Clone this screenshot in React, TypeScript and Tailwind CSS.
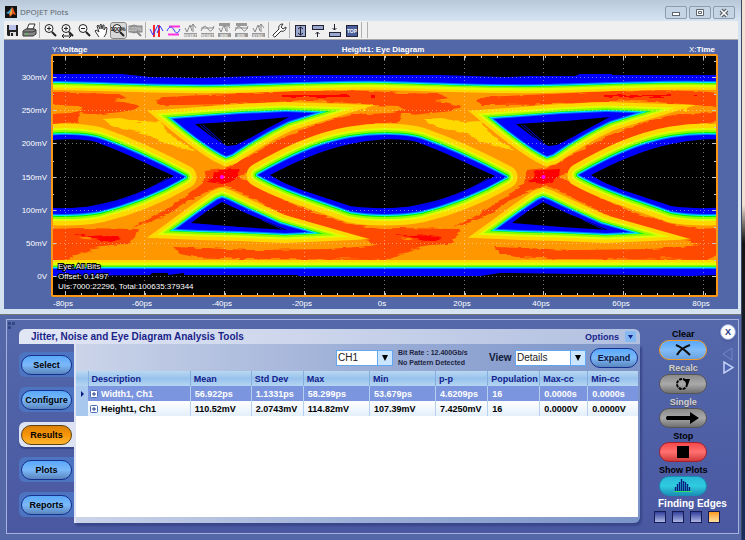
import { useState } from 'react';
import type { ReactNode } from 'react';
import clsx from 'clsx';

const PERIOD = 321;
const SHIFTS = [-PERIOD, 0, PERIOD];

// One unit interval of the eye, centred on the crossing at x = 222.
const EYE = {
  edge: 'M258 175 C285 160 315 144 350 138 C375 134 405 134 421 139 C450 149 480 163 506 177 C480 192 450 204 421 211 C400 215 370 215 350 211 C315 198 285 190 258 175Z',
  core: 'M270 175 C295 162 322 150 350 144 C378 138 402 138 417 142 C445 152 470 165 495 176 C470 189 445 200 417 205 C400 209 370 209 350 206 C315 194 290 188 270 175Z',
};

const WEDGES = [
  {
    edge: 'M173 119 L200 117 L240 114 L285 112 L315 113 L289 121 C265 132 245 145 232 154 L226 156 L220 153 C204 144 190 133 173 119Z',
    core: 'M195 124 L245 121 L289 117 C276 124 262 131 252 137 L236 145 L227 146 L212 137Z',
  },
  {
    edge: 'M176 229 L198 213 L217 200 L222 198 L228 200 C244 208 262 216 280 224 L308 232 L285 233 L240 231 L200 230Z',
    core: 'M191 223 L207 211 L222 202 L248 214 L268 222 L287 230 L240 227Z',
  },
];

const LAYERS = [
  { color: '#ffd800', eye: 23, wedge: 20, rail: 18 },
  { color: '#dfff00', eye: 14, wedge: 13, rail: 13 },
  { color: '#8cff00', eye: 10, wedge: 9, rail: 8 },
  { color: '#00f000', eye: 6, wedge: 5, rail: 5 },
  { color: '#00e8ff', eye: 4, wedge: 4, rail: 4 },
  { color: '#0070ff', eye: 2, wedge: 2, rail: 2 },
];

const TOP_EDGE = 'M-20 0 V81 H60 C110 82 170 85 225 84 S340 80 385 81 S490 85 545 84 S650 80 706 81 H800 V0Z';
const BOTTOM_EDGE = 'M-20 400 V269 H800 V400Z';

const X_TICKS = [
  { x: 65, label: '-80ps' },
  { x: 144, label: '-60ps' },
  { x: 224, label: '-40ps' },
  { x: 304, label: '-20ps' },
  { x: 384, label: '0s' },
  { x: 464, label: '20ps' },
  { x: 543, label: '40ps' },
  { x: 623, label: '60ps' },
  { x: 703, label: '80ps' },
];

const Y_TICKS = [
  { y: 77, label: '300mV' },
  { y: 110, label: '250mV' },
  { y: 143, label: '200mV' },
  { y: 177, label: '150mV' },
  { y: 210, label: '100mV' },
  { y: 243, label: '50mV' },
  { y: 276, label: '0V' },
];

const MINOR_X = Array.from({ length: 41 }, (_, i) => 65 + i * 16);

function Traces() {
  return (
    <g fill="none" stroke="#ff4a00" strokeLinecap="round">
      {/* upper rail */}
      <path fill="#ff4a00" stroke="none" d="M155 101 L165 97 C200 95 240 94 270 92 C320 89 370 90 400 93 L440 94 L448 98 L436 100 L462 106 L451 111 L404 116 L395 108 C370 104 330 101 290 101 C250 104 200 105 160 105Z" />
      {/* lower rail */}
      <path fill="#ff4a00" stroke="none" d="M173 247 L205 248 L250 250 L330 249 L370 246 L400 240 L460 230 L440 244 L415 247 L424 249 L400 254 L385 260 L240 259 L195 257 L180 254Z" />
      <path fill="#ff4a00" stroke="none" d="M370 229 L400 228 L460 229 L455 238 L450 244 L400 246 L370 244Z" />
      {/* edges leaving the crossing */}
      <path strokeWidth="13" d="M222 177 C255 163 280 143 312 133 C340 123 370 117 402 115" />
      <path strokeWidth="13" d="M222 177 C255 190 280 208 312 219 C340 229 370 237 410 239" />
      {/* edges entering the crossing */}
      <path fill="#ff4a00" stroke="none" d="M132 228 L160 213 L185 197 L203 183 L206 170 L222 168 L226 185 L206 192 L190 200 L168 214 L150 222Z" />
      <path fill="#ffd800" stroke="none" d="M103 119 L120 118 L140 122 L160 121 L165 128 L172 136 L196 152 L176 146 L158 141 L149 135 L138 132 L122 129 L108 124Z" />
      <path fill="#ffd800" stroke="none" d="M365 106 L384 107 L392 110 L362 112Z" />
      {/* lighter patches where the settled levels spread */}
      <path fill="#ff9800" stroke="none" d="M401 113 L432 117 L462 113 L500 113 L482 121 L455 123 L424 124 L400 122Z" />
      <path fill="#ff9800" stroke="none" d="M366 105 L398 106 L405 110 L392 113 L366 114Z" />
      <path fill="#ff9800" stroke="none" d="M410 250 L438 245 L458 244 L490 240 L493 245 L496 252 L510 256 L505 260 L412 260 L422 255Z" />
      <path stroke="#ff9800" strokeWidth="1" d="M402 238 L412 239 M410 252 L422 253 M445 96 L462 97 M436 101 L455 102 M455 109 L475 108" />
      <path stroke="#ff9800" strokeWidth="1" d="M255 249 h18 M296 101 h30 M340 258 h10 M178 187 h8" />
      {/* densest hits */}
      <path fill="#ff0000" stroke="none" d="M207 182 L213 178 L214 172 L220 170 L239 169 L238 176 L231 182 L222 184Z" />
      <path fill="#ff0000" stroke="none" d="M395 234 L412 236 L430 235 L438 236 L442 239 L432 242 L420 240 L410 237 L397 235Z" />
      <path stroke="#ff0000" strokeWidth="2" strokeLinecap="butt" d="M283 96 H350 M371 96 h4" />
    </g>
  );
}

function EyeDiagram() {
  return (
    <svg viewBox="4 40 734 269" className="block w-full" role="img" aria-label="Height1: Eye Diagram">
      <defs>
        <clipPath id="plot-area">
          <rect x="52" y="56" width="664" height="239" />
        </clipPath>
        <filter id="rough" x="0" y="0" width="100%" height="100%">
          <feTurbulence type="fractalNoise" baseFrequency="0.08 0.4" numOctaves="2" seed="4" />
          <feDisplacementMap in="SourceGraphic" scale="4" xChannelSelector="R" yChannelSelector="G" />
        </filter>
      </defs>
      <rect x="4" y="40" width="734" height="269" fill="#5267a7" />
      <rect x="52" y="55" width="664" height="241" fill="#000" />

      <g clipPath="url(#plot-area)">
        <rect x="40" y="56" width="700" height="239" fill="#ff9800" />
        <g filter="url(#rough)">
          {SHIFTS.map((s) => (
            <g key={s} transform={`translate(${s} 0)`}>
              <Traces />
            </g>
          ))}
        </g>
        {LAYERS.map((layer) => (
          <g key={layer.color} stroke={layer.color} fill={layer.color}>
            {SHIFTS.map((s) => (
              <g key={s} transform={`translate(${s} 0)`}>
                <path d={EYE.edge} strokeWidth={layer.eye} strokeLinejoin="round" />
                {WEDGES.map((w) => (
                  <path key={w.edge} d={w.edge} strokeWidth={layer.wedge} strokeLinejoin="miter" strokeMiterlimit="12" />
                ))}
              </g>
            ))}
            <path d={TOP_EDGE} strokeWidth={layer.rail} />
            <path d={BOTTOM_EDGE} strokeWidth={layer.rail} />
          </g>
        ))}
        <g fill="#0000ff">
          <path d={TOP_EDGE} />
          <path d={BOTTOM_EDGE} />
          {SHIFTS.map((s) => (
            <g key={s} transform={`translate(${s} 0)`}>
              {[EYE, ...WEDGES].map((h) => (
                <g key={h.edge}>
                  <path d={h.edge} />
                  <path d={h.core} fill="#000" />
                </g>
              ))}
              <path d="M200 125 L224 146 M203 125 L222 142 M316 151 L342 144 M416 207 C441 202 466 192 489 178 M262 220 L284 230" fill="none" stroke="#0000d0" />
            </g>
          ))}
        </g>
        <path fill="#000" d="M40 50 H740 V75 H612 V74 H580 L575 76 H530 L505 77 L440 75 H290 L255 76 L200 78 L150 77 L122 74 H40Z" />
        <path fill="#000" d="M40 300 V276 L150 275 L152 273 H168 V275 L184 273 V275 L298 275 V276 H480 L500 273 H508 L640 275 L690 276 L716 275 V300Z" />

        <g stroke="#fff" strokeOpacity="0.45" strokeDasharray="1 3">
          {X_TICKS.map((t) => (
            <path key={t.x} d={`M${t.x + 0.5} 56 V295`} />
          ))}
          {Y_TICKS.map((t) => (
            <path key={t.y} d={`M52 ${t.y + 0.5} H716`} />
          ))}
        </g>
        <g stroke="#c8c8c8">
          {MINOR_X.map((x) => (
            <path key={x} d={`M${x + 0.5} 56 v2 M${x + 0.5} 293 v2`} />
          ))}
          {X_TICKS.map((t) => (
            <path key={t.x} d={`M${t.x + 0.5} 56 v4 M${t.x + 0.5} 291 v4`} />
          ))}
          {Y_TICKS.map((t) => (
            <path key={t.y} d={`M52 ${t.y + 0.5} h4 M712 ${t.y + 0.5} h4 M52 ${t.y - 15.5} h2 M714 ${t.y - 15.5} h2`} />
          ))}
        </g>
        <circle cx="222" cy="177" r="2" fill="#ff00ff" />
        <circle cx="543.5" cy="177" r="2" fill="#ff00ff" />
      </g>
      <rect x="52" y="55" width="665" height="241" rx="1" fill="none" stroke="#fb9714" strokeWidth="2" />

      <g fontFamily="Liberation Sans, sans-serif" fontSize="8" fill="#fff">
        <text x="52" y="52">
          Y:<tspan fontWeight="bold">Voltage</tspan>
        </text>
        <text x="383" y="52" textAnchor="middle" fontWeight="bold">
          Height1: Eye Diagram
        </text>
        <text x="715" y="52" textAnchor="end">
          X:<tspan fontWeight="bold">Time</tspan>
        </text>
        {Y_TICKS.map((t) => (
          <text key={t.y} x="47" y={t.y + 3} textAnchor="end">
            {t.label}
          </text>
        ))}
        {X_TICKS.map((t) => (
          <text key={t.x} x={t.x - 2} y="306" textAnchor="middle">
            {t.label}
          </text>
        ))}
        <g stroke="#000" strokeWidth="2" paintOrder="stroke">
          <text x="58" y="269">Eye: All Bits</text>
          <text x="58" y="279">Offset: 0.1497</text>
          <text x="58" y="289">UIs:7000:22296, Total:100635:379344</text>
        </g>
      </g>
    </svg>
  );
}

function Magnifier({ children }: { children?: ReactNode }) {
  return (
    <g fill="none" stroke="#222">
      <circle cx="6" cy="5.5" r="4" fill="#f8f8f8" />
      <path d="M9 9 L13 13" strokeWidth="2" />
      {children}
    </g>
  );
}

function CursorReadout({ wave, top, label }: { wave: boolean; top?: boolean; label: string }) {
  return (
    <g stroke="#888" fill="none">
      {wave ? <path d="M1 5 H14 M1 8 C4 1 6 3 8 6 S12 9 14 3" /> : <path d="M2 5 L4 9 L7 2 L9 8 M10 9 V1 M8 4 L10 1 L13 5" />}
      <rect x="1" y="10" width="13" height="4" fill="#999" stroke="none" />
      <text x="7" y="14" textAnchor="middle" fontSize="4" fontWeight="bold" stroke="none" fill="#eee">
        {label}
      </text>
      {top && <rect x="2" y="0" width="11" height="3" fill="#999" stroke="none" />}
    </g>
  );
}

const TOOL_GROUPS: { name: string; icon: ReactNode; pressed?: boolean }[][] = [
  [
    {
      name: 'Save',
      icon: (
        <>
          <path d="M2 2 H13 V13 H3 L2 12Z" fill="#222" />
          <rect x="4" y="2" width="7" height="5" fill="#b8c0e8" />
          <rect x="5" y="9" width="6" height="4" fill="#ddd" />
          <rect x="6" y="10" width="2" height="3" fill="#222" />
        </>
      ),
    },
    {
      name: 'Print',
      icon: (
        <g stroke="#333">
          <path d="M5 6 L7 1 H13 L11 6Z" fill="#fff" />
          <path d="M1 8 L4 6 H13 L14 7 V11 L11 13 H1Z" fill="#888" />
          <path d="M2 9 H11 M11 9 L14 7" />
          <path d="M3 11 H6" stroke="#5c5" />
        </g>
      ),
    },
  ],
  [
    { name: 'Zoom in', icon: <Magnifier><path d="M4 5.5 h4 M6 3.5 v4" /></Magnifier> },
    { name: 'Zoom horizontally', icon: <Magnifier><path d="M4 5.5 h4 M6 3.5 v4 M2 13 h9 M4 11 l-2 2 l2 2 M9 11 l2 2 l-2 2" /></Magnifier> },
    { name: 'Zoom out', icon: <Magnifier><path d="M4 5.5 h4" /></Magnifier> },
    {
      name: 'Pan',
      icon: <path d="M5 14 L1 8 L2 7 L5 9 L3 3 L4 2 L6 6 V2 L7 1 L8 6 L9 2 L10 2 L10 7 L12 4 L13 5 L12 11 L10 14" fill="#fff" stroke="#333" />,
    },
    {
      name: 'Zoom 100%',
      pressed: true,
      icon: (
        <>
          <Magnifier />
          <text x="7" y="8" textAnchor="middle" fontSize="6" fontWeight="bold" fill="#111">100%</text>
        </>
      ),
    },
    {
      name: 'Zoom all',
      icon: (
        <g stroke="#888" fill="#999">
          <rect x="1" y="3" width="13" height="6" />
          <circle cx="6" cy="6" r="4" />
          <path d="M9 9 L13 13" strokeWidth="2" />
          <text x="7" y="8" textAnchor="middle" fontSize="5" fill="#ddd" stroke="none">100%</text>
        </g>
      ),
    },
  ],
  [
    {
      name: 'Vertical cursors',
      icon: (
        <g fill="none">
          <path d="M5 2 V14 M10 2 V14" stroke="#f22" strokeWidth="2" />
          <path d="M1 6 L4 12 L7 6 L9 2 M8 10 L11 3 L14 8" stroke="#33f" />
        </g>
      ),
    },
    {
      name: 'Horizontal cursors',
      icon: (
        <g fill="none">
          <path d="M3 3.5 H14 M2 11.5 H13" stroke="#f3d" strokeWidth="2" />
          <path d="M1 8 C3 3 6 3 8 7 S12 11 14 6" stroke="#33f" />
        </g>
      ),
    },
    { name: 'Reset vertical cursors', icon: <CursorReadout wave={false} label="RESET" /> },
    { name: 'Reset horizontal cursors', icon: <CursorReadout wave label="RESET" /> },
    { name: 'Vertical cursors max min', icon: <CursorReadout wave={false} top label="MIN" /> },
    { name: 'Horizontal cursors max min', icon: <CursorReadout wave top label="MIN" /> },
    { name: 'Sync cursors', icon: <CursorReadout wave={false} label="SYNC" /> },
  ],
  [
    {
      name: 'Settings',
      icon: <path d="M1 12 L7 6 C6 3 8 1 11 1 L9 4 L11 6 L14 4 C14 7 12 9 9 8 L3 14 C2 14 1 13 1 12Z" fill="#fff" stroke="#333" />,
    },
  ],
  [
    {
      name: 'Fit window',
      icon: (
        <g stroke="#223">
          <rect x="2.5" y="2.5" width="10" height="11" fill="#9aa8d0" />
          <path d="M7.5 4 V12 M5 6 L7.5 4 L10 6 M5 10 L7.5 12 L10 10" fill="none" />
        </g>
      ),
    },
    {
      name: 'Dock top',
      icon: (
        <g stroke="#223" fill="none">
          <rect x="2.5" y="2.5" width="11" height="4" fill="#9aa8d0" />
          <path d="M7.5 14 V9 M5.5 11 L7.5 9 L9.5 11" />
        </g>
      ),
    },
    {
      name: 'Dock bottom',
      icon: (
        <g stroke="#223" fill="none">
          <rect x="2.5" y="9.5" width="11" height="4" fill="#9aa8d0" />
          <path d="M7.5 1 V7 M5.5 5 L7.5 7 L9.5 5" />
        </g>
      ),
    },
    {
      name: 'Always on top',
      icon: (
        <>
          <rect x="2.5" y="2.5" width="11" height="11" fill="#4a5f9c" stroke="#223" />
          <text x="8" y="10" textAnchor="middle" fontSize="5" fontWeight="bold" fill="#fff">TOP</text>
        </>
      ),
    },
  ],
];

function Toolbar() {
  return (
    <div className="flex h-[19px] items-center border-b border-[#a8a8a8] bg-[#f0f0f0] pl-px">
      {TOOL_GROUPS.map((group) => (
        <div key={group[0].name} className="flex items-center">
          <div className="flex gap-[2px]">
            {group.map((tool) => (
              <button
                key={tool.name}
                type="button"
                aria-label={tool.name}
                className={clsx('size-[15px]', tool.pressed && 'rounded-xs bg-[#d8d8d8] outline outline-[#888]')}
              >
                <svg viewBox="0 0 15 15" className="block size-[15px]" fontFamily="Liberation Sans, sans-serif">
                  {tool.icon}
                </svg>
              </button>
            ))}
          </div>
          <span className="mr-[3px] ml-[2px] h-4 w-px bg-[#b0b0b0]" />
        </div>
      ))}
      <span className="ml-[2px] h-4 w-px bg-[#b0b0b0]" />
    </div>
  );
}

function PlotWindow() {
  return (
    <section className="border-b border-[#777] bg-[#d5e3f1] pr-[3px] pb-[5px] pl-1">
      <header className="-mr-[3px] -ml-1 flex h-[21px] items-center bg-linear-to-b from-[#b9c8d9] to-[#d6e4f2] px-[5px] pt-[3px]">
        <svg viewBox="0 0 12 12" className="size-3" aria-hidden="true">
          <rect width="12" height="12" fill="#111" />
          <path d="M1 7 L4 5 L7 1 L6 9 L4 8Z" fill="#3f9fd0" />
          <path d="M7 1 L8 2 L11 9 L8 8 L5 11 L4 8 L6 5Z" fill="#e0561e" />
          <path d="M7 2 L7 7 L5 10 L5 7Z" fill="#f5b03c" />
        </svg>
        <h1 className="flex-1 pl-[3px] font-['Open_Sans','Liberation_Sans',sans-serif] text-[8px] leading-3 text-[#59626b]">DPOJET Plots</h1>
        <div className="flex gap-[2px] pr-px">
          {[
            { name: 'Minimize', icon: <rect x="6.5" y="5.5" width="7" height="3" /> },
            { name: 'Maximize', icon: <path d="M6.5 2.5 h7 v6 h-7Z M8.5 4.5 h3 v2 h-3Z" /> },
            {
              name: 'Close',
              icon: (
                <>
                  <path d="M7 3 L13 9 M13 3 L7 9" strokeWidth="4" />
                  <path d="M7 3 L13 9 M13 3 L7 9" stroke="#fff" strokeWidth="1.5" />
                </>
              ),
            },
          ].map((b) => (
            <button key={b.name} type="button" aria-label={b.name} className="rounded-xs border border-[#8b9bb0] bg-[#c5d4e4]">
              <svg viewBox="0 0 20 11" className="block h-[11px] w-5" fill="#fff" stroke="#5d6670">
                {b.icon}
              </svg>
            </button>
          ))}
        </div>
      </header>
      <Toolbar />
      <EyeDiagram />
    </section>
  );
}

const COLUMNS = ['Description', 'Mean', 'Std Dev', 'Max', 'Min', 'p-p', 'Population', 'Max-cc', 'Min-cc'];

const ROWS = [
  ['Width1, Ch1', '56.922ps', '1.1331ps', '58.299ps', '53.679ps', '4.6209ps', '16', '0.0000s', '0.0000s'],
  ['Height1, Ch1', '110.52mV', '2.0743mV', '114.82mV', '107.39mV', '7.4250mV', '16', '0.0000V', '0.0000V'],
];

function ResultsTable() {
  const [selected, setSelected] = useState(0);
  return (
    <table className="w-full table-fixed border-collapse text-left text-[9px] leading-[14px] font-bold whitespace-nowrap">
      <colgroup>
        <col className="w-[12px]" />
        <col className="w-[102px]" />
        <col className="w-[61px]" />
        <col className="w-[52px]" />
        <col className="w-[66px]" />
        <col className="w-[66px]" />
        <col className="w-[52px]" />
        <col className="w-[52px]" />
        <col className="w-[48px]" />
        <col className="w-[50px]" />
      </colgroup>
      <thead>
        <tr className="h-[15px] bg-linear-to-b from-[#b9d8f2] via-[#98c2ec] to-[#b5d5f2] text-[#10208c]">
          <th className="border-r border-[#84aede] p-0" aria-label="Row" />
          {COLUMNS.map((c) => (
            <th key={c} className="border-r border-[#84aede] p-0 pl-[3px] last:border-r-0">
              {c}
            </th>
          ))}
        </tr>
      </thead>
      <tbody>
        {ROWS.map((row, i) => (
          <tr
            key={row[0]}
            onClick={() => setSelected(i)}
            className={clsx('h-[15px]', i === selected ? 'bg-[#7b96de] text-white' : 'bg-linear-to-b from-white to-[#e3effb] text-black')}
          >
            <td className="bg-[#a9c8ee] p-0">
              {i === selected && (
                <svg viewBox="0 0 12 8" className="block h-2 w-3" aria-hidden="true">
                  <path d="M5 1 L8 4 L5 7Z" fill="#0a1a80" />
                </svg>
              )}
            </td>
            {row.map((value, j) => (
              <td key={COLUMNS[j]} className="border-r border-[#b5d0f0] p-0 pl-1 last:border-r-0">
                {j === 0 ? (
                  <span className="-ml-[2px] flex items-center gap-[3px]">
                    <svg viewBox="0 0 8 8" className="size-2" aria-hidden="true">
                      <rect x="0.5" y="0.5" width="7" height="7" rx="1" fill="#fff" stroke="#4a6db8" />
                      <path d="M2 4 H6 M4 2 V6" stroke="#223a88" />
                    </svg>
                    {value}
                  </span>
                ) : (
                  value
                )}
              </td>
            ))}
          </tr>
        ))}
      </tbody>
    </table>
  );
}

function Dropdown({ label, options, className }: { label: string; options: string[]; className: string }) {
  return (
    <span className={clsx('relative block h-4', className)}>
      <select aria-label={label} className="block h-4 w-full appearance-none border border-[#63a8ee] bg-white pl-px text-[10px] leading-[14px] text-[#222]">
        {options.map((o) => (
          <option key={o}>{o}</option>
        ))}
      </select>
      <svg viewBox="0 0 15 14" className="pointer-events-none absolute top-px right-px h-[14px] w-[15px] bg-[#cbe5ff]" aria-hidden="true">
        <path d="M0.5 0 V14" stroke="#63a8ee" />
        <path d="M5 4 H11 L8 10Z" fill="#000" />
      </svg>
    </span>
  );
}

const TABS = ['Select', 'Configure', 'Results', 'Plots', 'Reports'];

const BLUE_PILL = 'border-[#16308f] bg-linear-to-b from-[#58a8fa] via-[#7cb9fa] to-[#5a86bd]';

const ACTIONS = [
  {
    label: 'Clear',
    text: 'text-black',
    pill: 'border-[#f09a2a] bg-linear-to-b from-[#58a8fa] via-[#80bcf8] to-[#6aa2e0]',
    icon: <path d="M12 4 C17 6 21 9 26 14 M26 4 C20 6 15 10 13 14" fill="none" stroke="#111" strokeWidth="2" />,
  },
  {
    label: 'Recalc',
    text: 'text-[#d0d0d0] [text-shadow:0_1px_0_#555]',
    pill: 'border-[#555] bg-linear-to-b from-[#8a8a8a] via-[#aaa] to-[#707070]',
    icon: (
      <>
        <circle cx="18" cy="9" r="5" fill="none" stroke="#000" strokeWidth="2" strokeDasharray="3 1" />
        <path d="M19 4 L26 4 L24 10Z" fill="#000" />
      </>
    ),
  },
  {
    label: 'Single',
    text: 'text-[#d0d0d0] [text-shadow:0_1px_0_#555]',
    pill: 'border-[#555] bg-linear-to-b from-[#8a8a8a] via-[#aaa] to-[#707070]',
    icon: <path d="M3 7 H26 V3 L35 9 L26 15 V11 H3 Q1 9 3 7Z" fill="#000" />,
  },
  {
    label: 'Stop',
    text: 'text-black',
    pill: 'border-[#a02030] bg-linear-to-b from-[#f84848] via-[#ff7070] to-[#d03838]',
    icon: <rect x="13" y="3" width="12" height="12" fill="#000" />,
  },
  {
    label: 'Show Plots',
    text: 'text-black',
    pill: 'border-[#168fb4] bg-linear-to-b from-[#28b8d8] via-[#30cce0] to-[#1c90b8]',
    icon: (
      <>
        <path d="M11.5 14 V10 M13.5 14 V7 M15.5 14 V5 M17.5 14 V2 M19.5 14 V4 M21.5 14 V5 M23.5 14 V7 M25.5 14 V10" stroke="#0a2080" strokeWidth="1.4" />
        <path d="M10 14.5 H28" stroke="#30e060" />
      </>
    ),
  },
];

function ActionRail() {
  return (
    <aside className="-mt-px flex w-[98px] shrink-0 flex-col pl-1">
      <div className="flex justify-between">
        <div className="flex flex-col pl-[15px]">
          {ACTIONS.map((a) => (
            <label key={a.label} className="flex flex-col items-center">
              <span className={clsx('h-3 text-[9px] leading-3 font-bold', a.text)}>{a.label}</span>
              <button type="button" aria-label={a.label} className={clsx('mb-[2px] rounded-full border', a.pill)}>
                <svg viewBox="0 0 38 18" className="mx-1 block h-[18px] w-[38px]">
                  {a.icon}
                </svg>
              </button>
            </label>
          ))}
        </div>
        <div className="-mt-1 flex w-5 flex-col items-center">
          <button type="button" aria-label="Close" className="mb-2 size-4 rounded-full border border-[#8fa0d8] bg-white text-[9px] leading-3 font-bold text-[#1f2f86] shadow">
            X
          </button>
          <svg viewBox="0 0 12 26" className="h-[26px] w-3" fill="none" aria-hidden="true">
            <path d="M10 0 V12 L1 6Z" stroke="#7585c4" />
            <path d="M2 14 V25 L11 19.5Z" stroke="#c3d2f8" strokeWidth="1.5" fill="#4d64b4" />
          </svg>
        </div>
      </div>
      <p className="pl-[14px] text-[10px] leading-3 font-bold text-white">Finding Edges</p>
      <div className="flex gap-[6px] pt-px pl-[10px]">
        {[0, 1, 2, 3].map((i) => (
          <span
            key={i}
            className={clsx('size-3 border border-[#151c55] bg-linear-to-b', i === 3 ? 'from-[#ff9a18] to-[#ffe09a]' : 'from-[#35409a] to-[#b0b6e4]')}
          />
        ))}
      </div>
    </aside>
  );
}

function AnalysisWindow() {
  const [tab, setTab] = useState('Results');
  return (
    <section className="flex flex-1 flex-col bg-[#5468a8] pt-1 pr-[2px] pb-[6px] pl-[6px]">
      <div className="relative flex flex-1 border border-[#a6b2dc] bg-linear-to-b from-[#5468aa] to-[#4a58a2] pt-[9px] pb-[10px] pl-3">
        <svg viewBox="0 0 8 7" className="absolute top-[2px] left-px h-[7px] w-2" aria-hidden="true">
          <path d="M0 0 h3 v3 h-3Z M4 0 h3 v3 h-3Z M0 4 h3 v3 h-3Z" fill="#344684" />
        </svg>
        <div className="flex min-w-0 flex-1 flex-col">
          <header className="flex h-[15px] items-center justify-between rounded-t-md bg-linear-to-r from-[#e2e7f5] to-[#b2c0e0] pr-1 pl-3 text-[#1a1f8a]">
            <h2 className="text-[10px] leading-[15px] font-bold">Jitter, Noise and Eye Diagram Analysis Tools</h2>
            <button type="button" className="flex items-center gap-[6px] text-[9px] leading-3 font-bold">
              Options
              <svg viewBox="0 0 11 11" className="size-[11px]" aria-hidden="true">
                <rect width="11" height="11" rx="1" fill="#86b8f2" />
                <path d="M3 4 H8 L5.5 8Z" fill="#10208c" />
              </svg>
            </button>
          </header>
          <div className="flex flex-1">
            <nav className="flex w-[55px] shrink-0 flex-col gap-[10px] pt-2">
              {TABS.map((t) => (
                <div
                  key={t}
                  className={clsx('flex h-[25px] items-center rounded-l-md pl-[2px]', t === tab ? 'bg-[#dde3f3] shadow-[0_2px_1px_#38468a]' : 'bg-[#4d74c0]')}
                >
                  <button
                    type="button"
                    onClick={() => setTab(t)}
                    className={clsx(
                      'h-5 w-[51px] rounded-full border text-[9px] leading-3 font-bold text-black',
                      t === tab ? 'border-[#5c4010] bg-linear-to-b from-[#dc8208] via-[#f79608] to-[#ffb52e]' : BLUE_PILL,
                    )}
                  >
                    {t}
                  </button>
                </div>
              ))}
            </nav>
            <div className="flex min-w-0 flex-1 flex-col rounded-br-md border-l-2 border-[#dde3f3] bg-linear-to-r from-[#cbd4e9] via-[#9dafd7] to-[#7b93c8] pr-[2px] pb-[6px] shadow-[2px_3px_2px_#39478a]">
              <div className="flex h-[27px] items-center justify-end">
                <Dropdown label="Source" options={['CH1', 'CH2', 'CH3', 'CH4']} className="w-[57px]" />
                <p className="ml-[5px] w-[91px] text-[7px] leading-[10px] font-bold text-[#1c2440]">
                  Bit Rate : 12.400Gb/s
                  <br />
                  No Pattern Detected
                </p>
                <span className="w-[26px] text-[10px] font-bold text-[#101838]">View</span>
                <Dropdown label="View" options={['Details', 'Summary']} className="w-[71px]" />
                <button type="button" className={clsx('ml-1 h-5 w-12 rounded-full border text-[9px] leading-3 font-bold text-[#0a1440]', BLUE_PILL)}>
                  Expand
                </button>
              </div>
              <div className="flex-1 bg-white">
                <ResultsTable />
              </div>
            </div>
          </div>
        </div>
        <ActionRail />
      </div>
    </section>
  );
}

export default function App() {
  return (
    <div className="flex min-h-screen bg-[#5468a8] font-['Liberation_Sans',Arial,sans-serif]">
      <main className="flex min-w-0 flex-1 flex-col">
        <PlotWindow />
        <AnalysisWindow />
      </main>
      <div className="w-1 shrink-0 border-l border-[#3c4664] bg-linear-to-b from-[#f3dfd2] from-38% via-[#141414] via-45% to-[#18305e]" />
    </div>
  );
}
